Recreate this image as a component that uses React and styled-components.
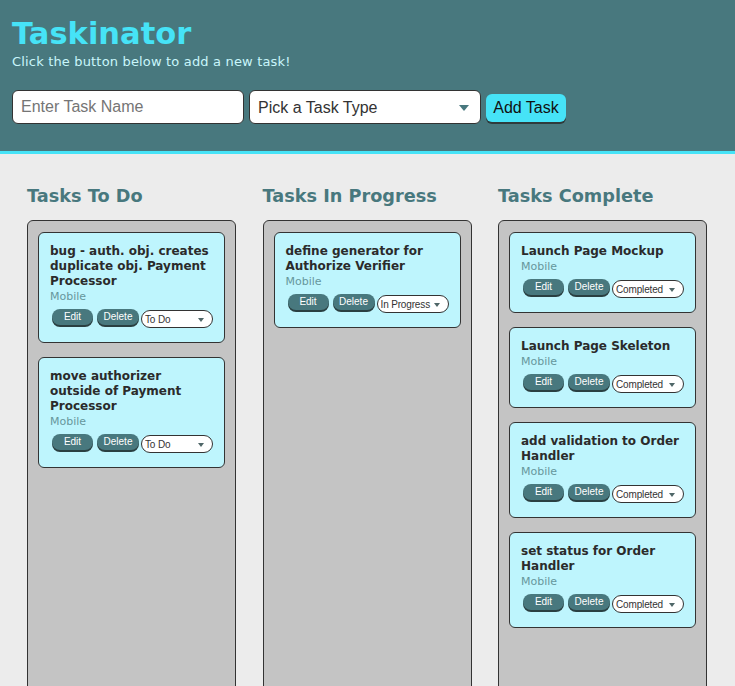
import React from "react";
import styled, { createGlobalStyle } from "styled-components";

const Global = createGlobalStyle`
  html, body { margin: 0; padding: 0; background: #ececec; }
  body { font-family: "DejaVu Sans", Verdana, sans-serif; }
  * { box-sizing: border-box; }
`;

const Header = styled.header`
  background: #48787e;
  padding: 16px 12px 27px;
  border-bottom: 3px solid #46e3f7;
`;

const Title = styled.h1`
  margin: 0;
  font-size: 30.5px;
  line-height: 36px;
  font-weight: bold;
  color: #46e3f7;
`;

const Subtitle = styled.p`
  margin: 2px 0 0;
  font-size: 13px;
  line-height: 16px;
  letter-spacing: 0.17px;
  color: #c8f6fb;
`;

const Form = styled.form`
  display: flex;
  align-items: center;
  gap: 5px;
  margin-top: 20px;
`;

const TextInput = styled.input`
  width: 232px;
  height: 34px;
  border: 1px solid #333;
  border-radius: 6px;
  background: #fff;
  padding: 0 8px;
  font-family: "Liberation Sans", Arial, sans-serif;
  font-size: 16px;
  color: #333;
  &::placeholder { color: #757575; }
`;

const SelectWrap = styled.div`
  position: relative;
  display: inline-flex;
  &::after {
    content: "";
    position: absolute;
    right: ${(p) => (p.$small ? 9 : 12)}px;
    top: 50%;
    margin-top: ${(p) => (p.$small ? -1 : -2)}px;
    border-left: ${(p) => (p.$small ? 3.5 : 5)}px solid transparent;
    border-right: ${(p) => (p.$small ? 3.5 : 5)}px solid transparent;
    border-top: ${(p) => (p.$small ? 4 : 6)}px solid ${(p) => (p.$small ? "#4f6668" : "#48787e")};
    pointer-events: none;
  }
`;

const BigSelect = styled.select`
  appearance: none;
  -webkit-appearance: none;
  width: 232px;
  height: 34px;
  border: 1px solid #333;
  border-radius: 6px;
  background: #fff;
  padding: 0 8px;
  font-family: "Liberation Sans", Arial, sans-serif;
  font-size: 16px;
  color: #333;
`;

const AddButton = styled.button`
  width: 80px;
  height: 28px;
  margin-top: 1px;
  border: none;
  border-radius: 6px;
  background: #46e3f7;
  box-shadow: 0 2px 0 #2f3a3b;
  font-family: "Liberation Sans", Arial, sans-serif;
  font-size: 16px;
  color: #111;
  padding: 0;
`;

const Main = styled.main`
  display: grid;
  grid-template-columns: repeat(3, 209px);
  column-gap: 26.5px;
  padding: 32px 0 0 27px;
`;

const Column = styled.section`
  min-width: 0;
`;

const ColumnTitle = styled.h2`
  margin: 0 0 14px;
  font-size: 17.7px;
  line-height: 20px;
  font-weight: bold;
  color: #48787e;
  white-space: nowrap;
`;

const List = styled.ul`
  list-style: none;
  margin: 0;
  padding: 11px 10px;
  min-height: 560px;
  background: #c4c4c4;
  border: 1px solid #333;
  border-radius: 6px;
  display: flex;
  flex-direction: column;
  gap: 14px;
`;

const Card = styled.li`
  background: #bef5fd;
  border: 1px solid #333;
  border-radius: 6px;
  padding: 11px 11px 14px;
`;

const CardTitle = styled.h3`
  margin: 0;
  font-size: 12px;
  line-height: 15px;
  font-weight: bold;
  color: #2b2b2b;
`;

const CardType = styled.span`
  display: block;
  font-size: 11px;
  line-height: 15px;
  color: #66979c;
`;

const Actions = styled.div`
  display: flex;
  align-items: flex-start;
  margin: 5px 0 0 2px;
`;

const ActionButton = styled.button`
  width: ${(p) => p.$w}px;
  height: 16px;
  margin-right: ${(p) => p.$mr}px;
  border: none;
  border-radius: 8px;
  background: #48787e;
  box-shadow: 0 2px 0 #2a3f41;
  color: #fff;
  font-family: "Liberation Sans", Arial, sans-serif;
  font-size: 10px;
  line-height: 14px;
  padding: 0;
`;

const SmallSelect = styled.select`
  appearance: none;
  -webkit-appearance: none;
  width: 72px;
  height: 18px;
  margin-top: 1px;
  border: 1px solid #333;
  border-radius: 9px;
  background: #fff;
  padding: 0 3px;
  font-family: "Liberation Sans", Arial, sans-serif;
  font-size: 10px;
  letter-spacing: -0.15px;
  color: #333;
`;

const columns = [
  {
    title: "Tasks To Do",
    status: "To Do",
    tasks: [
      "bug - auth. obj. creates duplicate obj. Payment Processor",
      "move authorizer outside of Payment Processor",
    ],
  },
  {
    title: "Tasks In Progress",
    status: "In Progress",
    tasks: ["define generator for Authorize Verifier"],
  },
  {
    title: "Tasks Complete",
    status: "Completed",
    tasks: [
      "Launch Page Mockup",
      "Launch Page Skeleton",
      "add validation to Order Handler",
      "set status for Order Handler",
    ],
  },
];

function TaskCard({ name, status }) {
  return (
    <Card>
      <CardTitle>{name}</CardTitle>
      <CardType>Mobile</CardType>
      <Actions>
        <ActionButton $w={41} $mr={4}>Edit</ActionButton>
        <ActionButton $w={42} $mr={2}>Delete</ActionButton>
        <SelectWrap $small>
          <SmallSelect defaultValue={status}>
            <option>To Do</option>
            <option>In Progress</option>
            <option>Completed</option>
          </SmallSelect>
        </SelectWrap>
      </Actions>
    </Card>
  );
}

export default function App() {
  return (
    <>
      <Global />
      <Header>
        <Title>Taskinator</Title>
        <Subtitle>Click the button below to add a new task!</Subtitle>
        <Form onSubmit={(e) => e.preventDefault()}>
          <TextInput placeholder="Enter Task Name" />
          <SelectWrap>
            <BigSelect defaultValue="">
              <option value="" disabled>
                Pick a Task Type
              </option>
              <option>Web</option>
              <option>Mobile</option>
              <option>Print</option>
            </BigSelect>
          </SelectWrap>
          <AddButton type="submit">Add Task</AddButton>
        </Form>
      </Header>
      <Main>
        {columns.map((c) => (
          <Column key={c.title}>
            <ColumnTitle>{c.title}</ColumnTitle>
            <List>
              {c.tasks.map((t) => (
                <TaskCard key={t} name={t} status={c.status} />
              ))}
            </List>
          </Column>
        ))}
      </Main>
    </>
  );
}
